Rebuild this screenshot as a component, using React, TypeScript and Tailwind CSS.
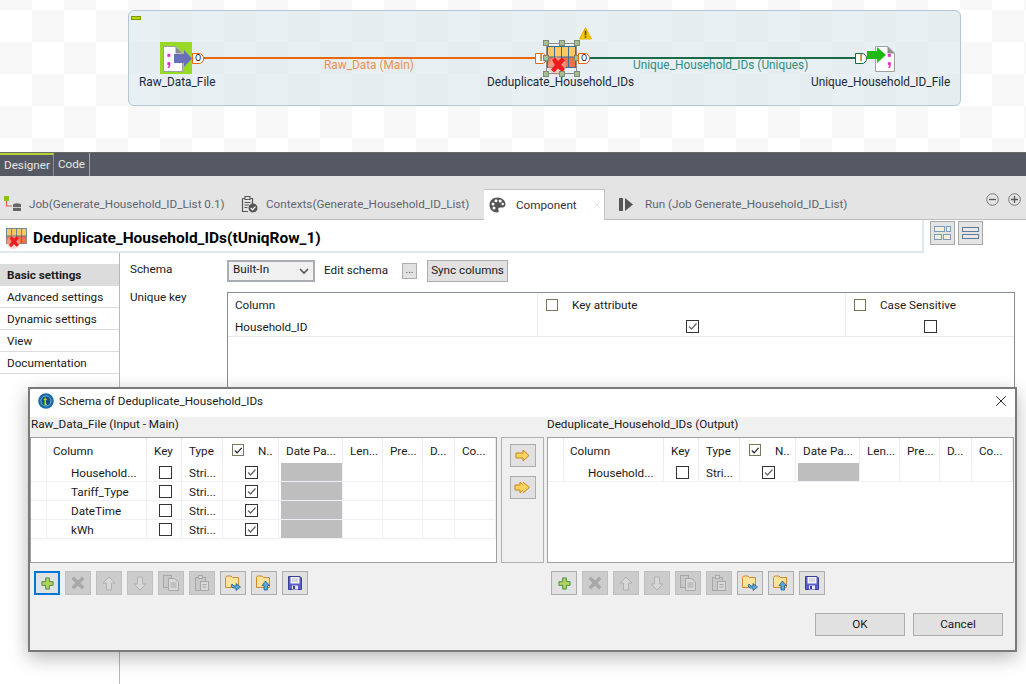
import React from 'react';
import { X } from 'lucide-react';

const FONT = "font-['Roboto','Liberation_Sans',sans-serif]";
const COL_WIDTHS = [16, 100, 35, 41, 56, 64, 40, 40, 32, 41];

// small square checkbox from the SWT tables
const Check = ({ on = false, olive = false }: { on?: boolean; olive?: boolean }) => (
  <span className={`inline-flex items-center justify-center bg-white border ${olive ? 'w-[12px] h-[12px] border-[#77775a]' : 'w-[13px] h-[13px] border-[#333]'}`}>
    {on && (
      <svg width="11" height="11" viewBox="0 0 11 11">
        <path d="M2 5.5 L4.5 8 L9.5 2.5" fill="none" stroke={olive ? '#222' : '#666'} strokeWidth="1.3" />
      </svg>
    )}
  </span>
);

const DocIcon = ({ semiX = 2.5 }: { semiX?: number }) => (
  <svg width="20" height="26" viewBox="0 0 20 26">
    <path d="M0.5 0.5 H13 L19.5 7 V25.5 H0.5 Z" fill="#fff" stroke="#a0a0a0" strokeWidth="1" />
    <path d="M12.5 0.5 V7.5 H19.5 Z" fill="#8b8b8b" />
    <text x={semiX} y="19" fontSize="20" fontWeight="700" fill="#ea22c8" fontFamily="Liberation Sans">;</text>
  </svg>
);

const WarnIcon = () => (
  <svg width="13" height="13" viewBox="0 0 13 13">
    <path d="M6.5 0.5 L12.5 12 H0.5 Z" fill="#f7c600" stroke="#e5b400" strokeWidth="1" strokeLinejoin="round" />
    <rect x="5.7" y="3.6" width="1.7" height="4.8" fill="#6b5200" />
    <rect x="5.7" y="9.2" width="1.7" height="1.7" fill="#6b5200" />
  </svg>
);

const UniqIcon = ({ size = 29 }: { size?: number }) => (
  <svg width={size} height={size} viewBox="0 0 29 29">
    <rect x="0.5" y="0.5" width="28" height="21" fill="#fcc764" stroke="#35709b" />
    <rect x="1" y="11" width="27" height="10" fill="#f2704a" />
    <path d="M7.5 1V21M14.5 1V21M21.5 1V21M1 11H28" stroke="#35709b" strokeWidth="1" fill="none" />
    <circle cx="10" cy="20" r="9" fill="#ffb0a0" opacity="0.55" />
    <path d="M5 14 L8 11.5 L11 15 L15 11.5 L18 14.5 L14 18.5 L18 23 L15 26 L11 22.5 L7 26.5 L4 23.5 L8 19 Z" fill="#ee1c1c" />
  </svg>
);

const Port = ({ label, color }: { label: string; color: string }) => (
  <div className={`absolute h-[11px] w-[12px] rounded-r-[5px] border bg-white text-[9px] leading-[9px] text-center text-[#222] ${color}`}>{label}</div>
);

const Handle = ({ cls }: { cls: string }) => (
  <div className={`absolute h-[6px] w-[6px] border border-[#7f8c74] bg-[#a5bf92] ${cls}`} />
);

const Canvas = () => (
  <div className="relative h-[152px] bg-[conic-gradient(#f8f8f8_25%,#ffffff_0_50%,#f8f8f8_0_75%,#ffffff_0)] bg-[length:64px_64px] bg-[position:0_10px] text-[11.85px] text-[#1c2a38]">
    <div className="absolute left-[128px] top-[10px] h-[96px] w-[833px] rounded-[6px] border border-[#b4c7d4] bg-[#d3e2ea]/50" />
    <div className="absolute left-[131px] top-[16px] h-[4px] w-[10px] border border-[#7f9a00] bg-[#b4dc00]" />

    <div className="absolute left-[203px] top-[57px] h-[2px] w-[332px] bg-[#e9680c]" />
    <div className="absolute left-[590px] top-[57px] h-[2px] w-[265px] bg-[#1a6a46]" />
    <div className="absolute left-[324px] top-[57px] text-[#e89152]">Raw_Data (Main)</div>
    <div className="absolute left-[633px] top-[57px] text-[#2f8d80]">Unique_Household_IDs (Uniques)</div>

    <div className="absolute left-[160px] top-[42px] h-[32px] w-[32px] bg-[#98d925]" />
    <div className="absolute left-[163px] top-[46px]"><DocIcon /></div>
    <svg className="absolute left-[174px] top-[50px]" width="18" height="17" viewBox="0 0 18 17">
      <path d="M0 4 H10 V0 L18 8.5 L10 17 V13 H0 Z" fill="#6a6fb9" />
    </svg>
    <div className="absolute left-[192px] top-[53px]"><Port label="O" color="border-[#e9680c]" /></div>
    <div className="absolute left-[139px] top-[74px]">Raw_Data_File</div>

    <div className="absolute left-[535px] top-[53px]"><Port label="I" color="border-[#e9680c]" /></div>
    <div className="absolute left-[547px] top-[46px]"><UniqIcon /></div>
    <div className="absolute left-[546px] top-[43px] h-[31px] w-[31px] border border-[#8b8b8b]" />
    <Handle cls="left-[543px] top-[40px]" />
    <Handle cls="left-[559px] top-[40px]" />
    <Handle cls="left-[574px] top-[40px]" />
    <Handle cls="left-[543px] top-[55px]" />
    <Handle cls="left-[574px] top-[55px]" />
    <Handle cls="left-[543px] top-[71px]" />
    <Handle cls="left-[559px] top-[71px]" />
    <Handle cls="left-[574px] top-[71px]" />
    <div className="absolute left-[579px] top-[27px]"><WarnIcon /></div>
    <div className="absolute left-[578px] top-[53px]"><Port label="O" color="border-[#e9680c]" /></div>
    <div className="absolute left-[487px] top-[74px]">Deduplicate_Household_IDs</div>

    <div className="absolute left-[855px] top-[53px]"><Port label="I" color="border-[#1a6a46]" /></div>
    <div className="absolute left-[875px] top-[46px]"><DocIcon semiX={11} /></div>
    <svg className="absolute left-[867px] top-[47px]" width="19" height="16" viewBox="0 0 19 16">
      <path d="M0 4 H10 V0 L19 8 L10 16 V12 H0 Z" fill="#1dbb12" />
    </svg>
    <div className="absolute left-[811px] top-[74px]">Unique_Household_ID_File</div>
  </div>
);

const JobIcon = () => (
  <svg width="18" height="16" viewBox="0 0 18 16">
    <rect x="0" y="0" width="5" height="5" fill="#8cc21c" />
    <path d="M2.5 5 V10 H8" fill="none" stroke="#d0604c" strokeWidth="1.2" />
    <ellipse cx="13" cy="9" rx="4" ry="1.8" fill="#666" />
    <rect x="9" y="9" width="8" height="6" fill="#666" />
    <path d="M9 11.5 H17" stroke="#e4e4e4" strokeWidth="0.8" />
  </svg>
);

const ContextsIcon = () => (
  <svg width="17" height="17" viewBox="0 0 17 17">
    <path d="M1.5 2.5 H11.5 V8 M7 15.5 H1.5 V2.5" fill="none" stroke="#555" strokeWidth="1.2" />
    <rect x="4" y="0.5" width="5" height="3" fill="#e4e4e4" stroke="#555" />
    <path d="M3.5 6.5 H9.5 M3.5 9 H8 M3.5 11.5 H6.5" stroke="#555" />
    <circle cx="12" cy="12" r="4.5" fill="#555" />
    <path d="M9.8 12 L11.5 13.8 L14.4 10.6" fill="none" stroke="#fff" strokeWidth="1.2" />
  </svg>
);

const PaletteIcon = () => (
  <svg width="17" height="16" viewBox="0 0 17 16">
    <path d="M8.5 0.5 C3.5 0.5 0.5 4 0.5 8 C0.5 12.5 4 15.5 8 15.5 C10 15.5 10 14 9.4 13 C8.8 11.8 9.5 10.5 11 10.5 H13.5 C15.5 10.5 16.5 9 16.5 7.5 C16.5 3.5 13 0.5 8.5 0.5 Z" fill="#555" />
    <circle cx="4" cy="7" r="1.5" fill="#fff" />
    <circle cx="7" cy="3.8" r="1.5" fill="#fff" />
    <circle cx="11.2" cy="4" r="1.5" fill="#fff" />
    <circle cx="13.7" cy="7" r="1.2" fill="#fff" />
    <circle cx="5" cy="11" r="1.5" fill="#fff" />
  </svg>
);

const RunIcon = () => (
  <svg width="14" height="13" viewBox="0 0 14 13">
    <rect x="0" y="0" width="4" height="13" fill="#555" />
    <path d="M6 0 L14 6.5 L6 13 Z" fill="#555" />
  </svg>
);

const CircleBtn = ({ plus = false }: { plus?: boolean }) => (
  <svg width="13" height="13" viewBox="0 0 13 13">
    <circle cx="6.5" cy="6.5" r="5.8" fill="none" stroke="#777" />
    <path d={plus ? 'M3 6.5H10M6.5 3V10' : 'M3 6.5H10'} stroke="#555" strokeWidth="1.3" />
  </svg>
);

const TabBar = () => (
  <div className="relative flex h-[44px] items-end border-b border-[#bdbdbd] bg-[#e4e4e4] text-[11.7px] text-[#5d6670]">
    <div className="flex h-[30px] w-[236px] items-center pl-[4px]">
      <JobIcon />
      <span className="ml-[7px] pt-[2px]">Job(Generate_Household_ID_List 0.1)</span>
    </div>
    <div className="flex h-[30px] w-[248px] items-center pl-[5px]">
      <ContextsIcon />
      <span className="ml-[8px] pt-[2px]">Contexts(Generate_Household_ID_List)</span>
    </div>
    <div className="-mb-px flex h-[31px] w-[121px] items-center border-r border-t border-[#c4c4c4] bg-white pl-[5px] text-[#333]">
      <PaletteIcon />
      <span className="ml-[10px] pt-[2px]">Component</span>
      <X className="ml-[15px] h-[10px] w-[10px] text-[#d4d4d4]" strokeWidth={1.5} />
    </div>
    <div className="flex h-[30px] items-center pl-[14px]">
      <RunIcon />
      <span className="ml-[12px] pt-[2px]">Run (Job Generate_Household_ID_List)</span>
    </div>
    <div className="ml-auto mb-[13px] mr-[5px] flex gap-[9px]">
      <CircleBtn />
      <CircleBtn plus />
    </div>
  </div>
);

const LayoutBtn = ({ two = false }: { two?: boolean }) => (
  <div className="flex h-[24px] w-[25px] items-center justify-center border border-[#a8a8a8] bg-[#e4e4e4]">
    {two ? (
      <svg width="17" height="14" viewBox="0 0 17 14">
        <rect x="0.5" y="1.5" width="16" height="4" fill="#e8e8e8" stroke="#5b7b9c" />
        <rect x="0.5" y="8.5" width="16" height="4" fill="#e8e8e8" stroke="#5b7b9c" />
      </svg>
    ) : (
      <svg width="17" height="15" viewBox="0 0 17 15">
        <rect x="0.5" y="0.5" width="10" height="5" fill="#f2efd8" stroke="#7d9bb8" />
        <rect x="12.5" y="0.5" width="4" height="5" fill="#f2efd8" stroke="#7d9bb8" />
        <rect x="0.5" y="8.5" width="7" height="5" fill="#f2efd8" stroke="#7d9bb8" />
        <rect x="9.5" y="8.5" width="7" height="5" fill="#f2efd8" stroke="#7d9bb8" />
      </svg>
    )}
  </div>
);

const SIDE_ITEMS = ['Advanced settings', 'Dynamic settings', 'View', 'Documentation'];

const Settings = () => (
  <div className="flex h-[431px] bg-white text-[11.7px] text-[#1a1a1a]">
    <div className="w-[120px] shrink-0 border-r border-[#b8b8b8] pt-[11px]">
      <div className="flex h-[22px] items-center bg-[#dcdcdc] pl-[7px] pt-px font-bold">Basic settings</div>
      {SIDE_ITEMS.map(item => (
        <div key={item} className="flex h-[22px] items-center border-b border-[#dcdcdc] pl-[7px] pt-[2px]">{item}</div>
      ))}
    </div>
    <div className="flex-1 pl-[10px] pt-[6px]">
      <div className="flex h-[23px] items-center">
        <span className="w-[97px] pb-[2px]">Schema</span>
        <div className="flex h-[22px] w-[88px] items-center border-2 border-[#a9aeb5] bg-[#f0f0f0] pl-[4px]">
          <span className="flex-1 pb-[2px]">Built-In</span>
          <svg width="16" height="16" viewBox="0 0 16 16" className="mr-[1px]">
            <path d="M4 6 L8 10 L12 6" fill="none" stroke="#555" strokeWidth="1.6" />
          </svg>
        </div>
        <span className="ml-[9px] w-[78px]">Edit schema</span>
        <div className="flex h-[16px] w-[15px] items-center justify-center border border-[#adadad] bg-[#e1e1e1] pb-[3px] text-[10px] text-[#555]">...</div>
        <div className="ml-[10px] flex h-[22px] w-[81px] items-center justify-center border border-[#adadad] bg-[#e1e1e1]">Sync columns</div>
      </div>
      <div className="mt-[10px] flex">
        <span className="-mt-[3px] w-[97px]">Unique key</span>
        <div className="h-[140px] w-[788px] border border-[#868b92]">
          <div className="flex h-[24px]">
            <div className="flex w-[310px] items-center border-r border-[#ececec] pl-[7px] pt-[2px]">Column</div>
            <div className="flex w-[308px] items-center gap-[14px] border-r border-[#ececec] pl-[8px]"><Check olive /><span className="pt-[2px]">Key attribute</span></div>
            <div className="flex flex-1 items-center gap-[14px] pl-[8px]"><Check olive /><span className="pt-[2px]">Case Sensitive</span></div>
          </div>
          <div className="flex h-[20px] border-b border-[#e8e8e8]">
            <div className="flex w-[310px] items-center border-r border-[#ececec] pl-[7px] pt-[2px]">Household_ID</div>
            <div className="flex w-[308px] items-center justify-center border-r border-[#ececec] pl-px"><Check on /></div>
            <div className="flex flex-1 items-center justify-center"><Check /></div>
          </div>
        </div>
      </div>
    </div>
  </div>
);

const HEADERS = ['', 'Column', 'Key', 'Type', 'N..', 'Date Pa...', 'Len...', 'Pre...', 'D...', 'Co...'];

const SchemaTable = ({ rows }: { rows: string[] }) => (
  <div className="h-[126px] w-[467px] border border-[#a0a0a0] bg-white text-[11.7px] text-[#1a1a1a]">
    <div className="flex h-[25px] items-center">
      {HEADERS.map((h, i) => (
        <div key={i} style={{ width: COL_WIDTHS[i] }} className={`flex h-full shrink-0 items-center border-r border-[#ececf2] pt-[2px] ${i === 1 ? 'pl-[6px]' : 'pl-[7px]'}`}>
          {i === 4 ? (
            <div className="-mt-[2px] flex items-center gap-[14px] pl-[2px]"><Check on olive /><span className="pt-[2px]">{h}</span></div>
          ) : h}
        </div>
      ))}
    </div>
    {rows.map(name => (
      <div key={name} className="flex h-[19px] border-b border-[#eef0f6]">
        {COL_WIDTHS.map((w, i) => (
          <div key={i} style={{ width: w }} className="flex shrink-0 items-center border-r border-[#eef0f6]">
            {i === 1 && <span className="pl-[24px] pt-[3px]">{name}</span>}
            {i === 2 && <span className="mx-auto flex pl-[2px]"><Check /></span>}
            {i === 3 && <span className="pl-[7px] pt-[3px]">Stri...</span>}
            {i === 4 && <span className="mx-auto flex pl-[2px]"><Check on /></span>}
            {i === 5 && <div className="ml-[2px] h-full w-[61px] bg-[#bebebe]" />}
          </div>
        ))}
      </div>
    ))}
  </div>
);

const ToolGlyph = ({ kind }: { kind: string }) => {
  switch (kind) {
    case 'add':
      return (
        <svg width="13" height="13" viewBox="0 0 14 14">
          <path d="M5 1 H9 V5 H13 V9 H9 V13 H5 V9 H1 V5 H5 Z" fill="#b6d25c" stroke="#3f8a4a" />
        </svg>
      );
    case 'del':
      return (
        <svg width="14" height="14" viewBox="0 0 14 14">
          <path d="M3 0.5 L7 4.5 L11 0.5 L13.5 3 L9.5 7 L13.5 11 L11 13.5 L7 9.5 L3 13.5 L0.5 11 L4.5 7 L0.5 3 Z" fill="#a8a8a8" />
        </svg>
      );
    case 'up':
      return (
        <svg width="14" height="15" viewBox="0 0 14 15">
          <path d="M7 1 L13 7 H9.5 V14 H4.5 V7 H1 Z" fill="#d8d8d8" stroke="#b0b0b0" />
        </svg>
      );
    case 'down':
      return (
        <svg width="14" height="15" viewBox="0 0 14 15">
          <path d="M7 14 L13 8 H9.5 V1 H4.5 V8 H1 Z" fill="#d8d8d8" stroke="#b0b0b0" />
        </svg>
      );
    case 'copy':
      return (
        <svg width="16" height="16" viewBox="0 0 16 16">
          <rect x="0.5" y="0.5" width="8" height="12" fill="#c8c8c8" stroke="#a8a8a8" />
          <path d="M5.5 3.5 H11.5 L15.5 7 V15.5 H5.5 Z" fill="#d8d8d8" stroke="#a8a8a8" />
          <path d="M7.5 8 H13.5 M7.5 10 H13.5 M7.5 12 H13.5" stroke="#a8a8a8" />
        </svg>
      );
    case 'paste':
      return (
        <svg width="14" height="16" viewBox="0 0 14 16">
          <rect x="0.5" y="2.5" width="10" height="13" fill="#c8c8c8" stroke="#a8a8a8" />
          <rect x="3.5" y="0.5" width="4" height="3" fill="#d4d4d4" stroke="#a8a8a8" />
          <rect x="5.5" y="6.5" width="8" height="9" fill="#d8d8d8" stroke="#a8a8a8" />
          <path d="M7.5 9.5 H11.5 M7.5 12 H11.5" stroke="#a8a8a8" />
        </svg>
      );
    case 'import':
    case 'export':
      return (
        <svg width="16" height="16" viewBox="0 0 16 16">
          <path d="M0.5 2.5 L1.5 1 H6 L7.5 2.5 H13.5 V12.5 H0.5 Z" fill="#fde29a" stroke="#cf8a2d" />
          {kind === 'import' ? (
            <path d="M7 9 L9 11 H11 V8.5 L15.5 12 L11 15.5 V13 H8 L6 11 Z" fill="#58a8d8" stroke="#1f5f96" strokeWidth="0.8" />
          ) : (
            <path d="M9.5 6 L13.5 10.5 H11.5 V15 H8 V10.5 H6 Z" fill="#58a8d8" stroke="#1f5f96" strokeWidth="0.8" />
          )}
        </svg>
      );
    default:
      return (
        <svg width="14" height="14" viewBox="0 0 14 14">
          <path d="M0.5 0.5 H12 L13.5 2 V13.5 H0.5 Z" fill="#5a5fc4" stroke="#383c9a" />
          <rect x="2.5" y="1" width="9" height="6.5" fill="#f4f4f8" />
          <path d="M4 3 H10 M4 5 H10" stroke="#b8b8d0" />
          <rect x="4" y="9.5" width="6" height="4" fill="#e8e8f0" />
          <rect x="5" y="10" width="2" height="3" fill="#383c9a" />
        </svg>
      );
  }
};

const TOOLS = ['add', 'del', 'up', 'down', 'copy', 'paste', 'import', 'export', 'save'];
const DISABLED = ['del', 'up', 'down', 'copy', 'paste'];

const Toolbar = ({ focused = false }: { focused?: boolean }) => (
  <div className="flex gap-[5px]">
    {TOOLS.map(t => (
      <div
        key={t}
        className={`flex h-[24px] w-[26px] items-center justify-center ${
          t === 'add' && focused
            ? 'border-2 border-[#0078d7] bg-[#e1e1e1]'
            : DISABLED.includes(t)
              ? 'border border-[#bfbfbf] bg-[#cccccc]'
              : 'border border-[#adadad] bg-[#e1e1e1]'
        }`}
      >
        <ToolGlyph kind={t} />
      </div>
    ))}
  </div>
);

const DialogLogo = () => (
  <svg width="16" height="16" viewBox="0 0 16 16">
    <circle cx="8" cy="8" r="7.8" fill="#1c6aa5" />
    <circle cx="8" cy="8" r="5" fill="#0f4f82" stroke="#8ac4e0" strokeWidth="0.8" />
    <text x="5.4" y="12" fontSize="10" fontWeight="700" fill="#c8dc1e" fontFamily="Liberation Sans">t</text>
  </svg>
);

const SchemaDialog = () => (
  <div className="absolute left-[28px] top-[387px] h-[265px] w-[989px] border-2 border-[#7a7a7a] bg-[#f0f0f0] text-[11.7px] text-[#1a1a1a] shadow-[0_6px_18px_rgba(0,0,0,0.28)]">
    <div className="flex h-[28px] items-center bg-white pb-[4px] pl-[8px]">
      <DialogLogo />
      <span className="ml-[5px] pt-[2px]">Schema of Deduplicate_Household_IDs</span>
      <X className="ml-auto mr-[5px] h-[18px] w-[18px] text-[#222]" strokeWidth={1.3} />
    </div>
    <div className="flex h-[20px] items-center pb-[4px]">
      <span className="w-[517px] pl-px">Raw_Data_File (Input - Main)</span>
      <span>Deduplicate_Household_IDs (Output)</span>
    </div>
    <div className="flex">
      <SchemaTable rows={['Household...', 'Tariff_Type', 'DateTime', 'kWh']} />
      <div className="ml-[4px] mr-[3px] flex h-[126px] w-[43px] flex-col items-center gap-[9px] border border-[#b0b0b0] pt-[6px]">
        <div className="flex h-[23px] w-[26px] items-center justify-center border border-[#adadad] bg-[#e1e1e1]">
          <svg width="15" height="13" viewBox="0 0 15 13"><path d="M1 4 H8 V1 L14 6.5 L8 12 V9 H1 Z" fill="#fbd35f" stroke="#c9851f" /></svg>
        </div>
        <div className="flex h-[23px] w-[26px] items-center justify-center border border-[#adadad] bg-[#e1e1e1]">
          <svg width="17" height="13" viewBox="0 0 17 13"><path d="M1 4 H6 V1 L12 6.5 L6 12 V9 H1 Z" fill="#fbd35f" stroke="#c9851f" /><path d="M9 1 L15.5 6.5 L9 12" fill="#fbd35f" stroke="#c9851f" /></svg>
        </div>
      </div>
      <SchemaTable rows={['Household...']} />
    </div>
    <div className="mt-[8px] flex">
      <div className="w-[521px] pl-[4px]"><Toolbar focused /></div>
      <Toolbar />
    </div>
    <div className="mt-[18px] flex justify-end gap-[8px] pr-[12px]">
      <div className="flex h-[23px] w-[90px] items-center justify-center border border-[#adadad] bg-[#e1e1e1]">OK</div>
      <div className="flex h-[23px] w-[90px] items-center justify-center border border-[#adadad] bg-[#e1e1e1]">Cancel</div>
    </div>
  </div>
);

export default function App() {
  return (
    <div className={`relative h-[684px] w-[1026px] overflow-hidden bg-white ${FONT}`}>
      <Canvas />
      <div className="flex h-[24px] border-t border-[#6a6a6a] bg-[#555963] text-[11.7px] text-[#e6e6e6]">
        <div className="flex w-[54px] items-center border-r border-t-2 border-[#b8d432] border-r-[#8a8d95] pl-[4px]">Designer</div>
        <div className="flex w-[36px] items-center border-r border-[#a5a8ae] pl-[4px]">Code</div>
      </div>
      <TabBar />
      <div className="flex h-[33px] bg-white">
        <div className="flex h-[33px] w-[924px] items-center border-b-2 border-r-2 border-[#dfe9f2] pl-[6px]">
          <span className="mt-[5px] flex"><UniqIcon size={21} /></span>
          <span className="ml-[6px] pt-[6px] text-[15.5px] font-bold text-black">Deduplicate_Household_IDs(tUniqRow_1)</span>
        </div>
        <div className="ml-[6px] mt-px flex gap-[3px]">
          <LayoutBtn />
          <LayoutBtn two />
        </div>
      </div>
      <Settings />
      <SchemaDialog />
    </div>
  );
}
